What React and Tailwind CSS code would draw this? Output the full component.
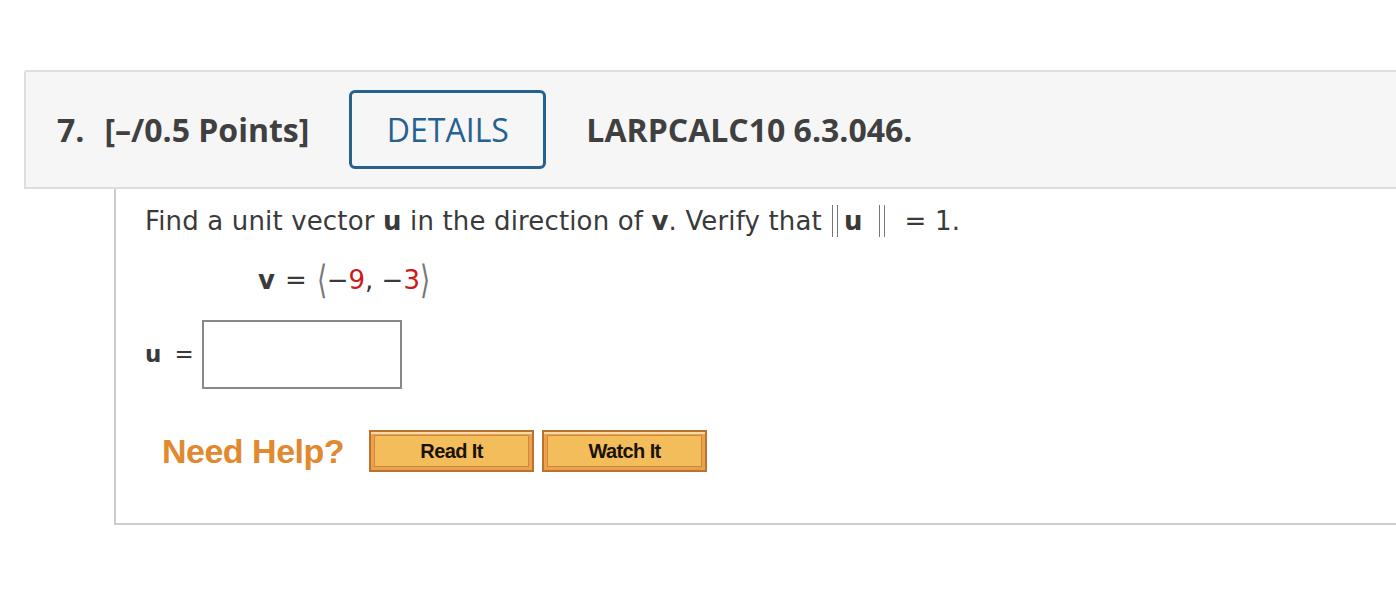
import React from 'react'

const ReadButton = ({ label }) => (
  <div className="h-[42px] w-[165px] border-2 border-[#b8742f] bg-[#f0a04a] p-[3px] shadow-[inset_0_2px_0_#f8d9a8]">
    <div className="flex h-full items-center justify-center border border-[#c78a44] bg-[#f2bd5a] font-['Liberation_Sans',Arial,sans-serif] text-[20px] font-bold tracking-[-0.6px] text-[#1a1209]">
      {label}
    </div>
  </div>
)

const App = () => {
  return (
    <div className="min-h-[596px] w-full overflow-hidden bg-white pt-[70px]">
      <div className="ml-[24px]">
        {/* question header */}
        <div className="flex h-[119px] items-center rounded-tl-[3px] border-y-2 border-l-2 border-[#dedede] bg-[#f6f6f6] pl-[31px] font-['Open_Sans',sans-serif] text-[#404040]">
          <span className="text-[32px] font-bold">7.</span>
          <span className="ml-[20px] text-[32px] font-bold">[–/0.5 Points]</span>
          <div className="ml-[40px] flex h-[79px] w-[197px] items-center justify-center rounded-[6px] border-[3px] border-[#26618f] text-[32px] text-[#26618f]">
            DETAILS
          </div>
          <span className="ml-[40px] text-[32px] font-bold">LARPCALC10 6.3.046.</span>
        </div>

        {/* question body */}
        <div className="ml-[90px] h-[336px] border-b-2 border-l-2 border-[#cccccc] pl-[29px] pt-[15px] font-['DejaVu_Sans',Verdana,sans-serif] text-[26px] text-[#3a3a3a]">
          <div className="flex h-[34px] items-center tracking-[0.15px]">
            <span>Find a unit vector <b>u</b> in the direction of <b>v</b>. Verify that</span>
            <span className="ml-[10px] flex items-center">
              <span className="mr-[6px] inline-block h-[32px] w-[6px] border-x border-[#777]" />
              <b>u</b>
              <span className="ml-[16px] inline-block h-[32px] w-[6px] border-x border-[#777]" />
            </span>
            <span className="ml-[20px]">= 1.</span>
          </div>

          <div className="mt-[25px] ml-[113px] flex h-[34px] items-center">
            <b>v</b>
            <span className="ml-[10px]">=</span>
            <span className="ml-[10px] scale-y-150 font-light text-[#777]">⟨</span>
            <span>−</span>
            <span className="text-[#cc1a1a]">9</span>
            <span>, −</span>
            <span className="text-[#cc1a1a]">3</span>
            <span className="scale-y-150 font-light text-[#777]">⟩</span>
          </div>

          <div className="mt-[23px] flex h-[69px] items-center text-[23px]">
            <b>u</b>
            <span className="ml-[13px]">=</span>
            <div className="ml-[8px] h-[69px] w-[200px] border-2 border-[#888]" />
          </div>

          <div className="mt-[41px] ml-[17px] flex h-[42px] items-center">
            <span className="font-['Liberation_Sans',Arial,sans-serif] text-[34px] font-bold tracking-[-0.5px] text-[#e0892e]">
              Need Help?
            </span>
            <div className="ml-[25px] flex gap-[8px]">
              <ReadButton label="Read It" />
              <ReadButton label="Watch It" />
            </div>
          </div>
        </div>
      </div>
    </div>
  )
}

export default App
